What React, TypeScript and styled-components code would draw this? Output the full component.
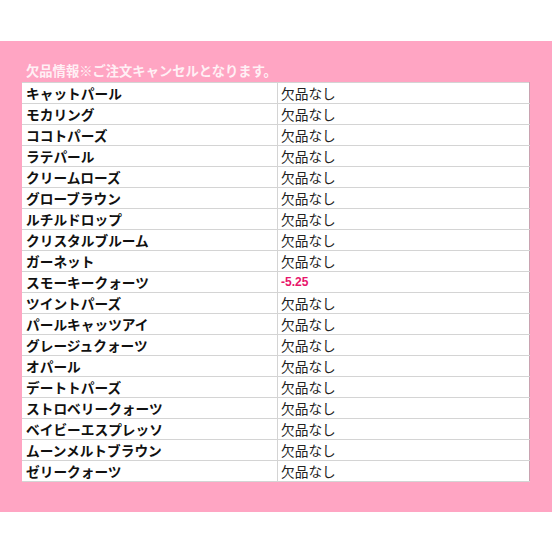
import * as React from 'react';
import styled, { createGlobalStyle } from 'styled-components';

const GlobalStyle = createGlobalStyle`
  html, body {
    margin: 0;
    padding: 0;
    background: #ffffff;
  }
  body {
    font-family: "Noto Sans CJK JP", "Noto Sans", sans-serif;
  }
`;

const Page = styled.div`
  padding-top: 41px;
`;

const Panel = styled.section`
  background: #ffa5c3;
  padding: 20px 22px 30px;
`;

const Title = styled.h2`
  margin: 0;
  height: 21px;
  line-height: 20px;
  padding-left: 4px;
  font-size: 13.3px;
  font-weight: 700;
  color: #fff0f5;
  white-space: nowrap;
`;

const Table = styled.table`
  width: 100%;
  border-collapse: collapse;
  background: #ffffff;
  table-layout: fixed;
`;

const Row = styled.tr`
  height: 21px;
`;

const NameCell = styled.td`
  width: 247px;
  padding: 0 4px;
  border: 1px solid #d4d4d4;
  border-left: none;
  font-size: 13.7px;
  font-weight: 700;
  color: #111;
  line-height: 20px;
  white-space: nowrap;
`;

const StatusCell = styled.td<{ $alert?: boolean }>`
  padding: 0 3px;
  border: 1px solid #d4d4d4;
  border-right: 1px solid #c9a2b0;
  line-height: 20px;
  white-space: nowrap;
  font-size: ${p => (p.$alert ? '12px' : '13.7px')};
  font-weight: ${p => (p.$alert ? 700 : 400)};
  font-family: ${p =>
    p.$alert ? '"Liberation Sans", Arial, sans-serif' : '"Noto Sans CJK JP", sans-serif'};
  color: ${p => (p.$alert ? '#e8156b' : '#222')};
`;

const items: [string, string][] = [
  ['キャットパール', '欠品なし'],
  ['モカリング', '欠品なし'],
  ['ココトパーズ', '欠品なし'],
  ['ラテパール', '欠品なし'],
  ['クリームローズ', '欠品なし'],
  ['グローブラウン', '欠品なし'],
  ['ルチルドロップ', '欠品なし'],
  ['クリスタルブルーム', '欠品なし'],
  ['ガーネット', '欠品なし'],
  ['スモーキークォーツ', '-5.25'],
  ['ツイントパーズ', '欠品なし'],
  ['パールキャッツアイ', '欠品なし'],
  ['グレージュクォーツ', '欠品なし'],
  ['オパール', '欠品なし'],
  ['デートトパーズ', '欠品なし'],
  ['ストロベリークォーツ', '欠品なし'],
  ['ベイビーエスプレッソ', '欠品なし'],
  ['ムーンメルトブラウン', '欠品なし'],
  ['ゼリークォーツ', '欠品なし'],
];

export default function App() {
  return (
    <Page>
      <GlobalStyle />
      <Panel>
        <Title>欠品情報※ご注文キャンセルとなります。</Title>
        <Table>
          <tbody>
            {items.map(([name, status]) => (
              <Row key={name}>
                <NameCell>{name}</NameCell>
                <StatusCell $alert={status !== '欠品なし'}>{status}</StatusCell>
              </Row>
            ))}
          </tbody>
        </Table>
      </Panel>
    </Page>
  );
}
